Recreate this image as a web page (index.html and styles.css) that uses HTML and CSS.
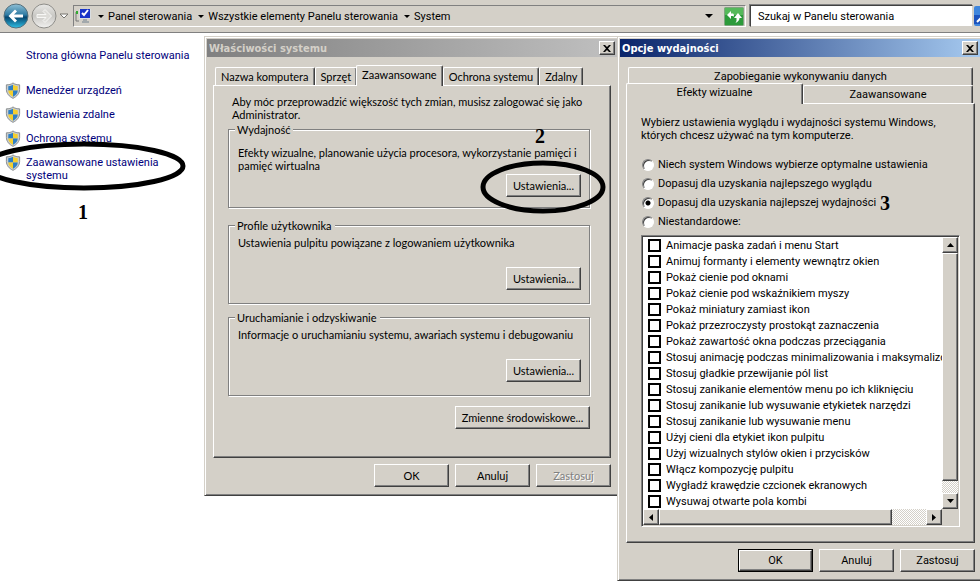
FILE: index.html
```html
<!DOCTYPE html>
<html lang="pl">
<head>
    <meta charset="UTF-8">
    <meta name="viewport" content="width=device-width, initial-scale=1.0">
    <title>System</title>
    <link rel="stylesheet" href="styles.css">
</head>
<body>
    <svg class="defs" aria-hidden="true">
        <linearGradient id="blueBall" x1="0" y1="0" x2="0" y2="1">
            <stop offset="0" stop-color="#8fc0d6"/>
            <stop offset="0.45" stop-color="#2f7ba3"/>
            <stop offset="0.55" stop-color="#06466f"/>
            <stop offset="1" stop-color="#2fc0e6"/>
        </linearGradient>
        <linearGradient id="grayBall" x1="0" y1="0" x2="0" y2="1">
            <stop offset="0" stop-color="#e8e8e6"/>
            <stop offset="0.5" stop-color="#c9c8c4"/>
            <stop offset="1" stop-color="#f2f2f0"/>
        </linearGradient>
        <symbol id="shield" viewBox="0 0 16 18">
            <path d="M8 1C6 2.600 3.500 3 1 3v5c0 4 3 7.500 7 9.300C12 15.500 15 12 15 8V3C12.500 3 10 2.600 8 1z" fill="#c9ced0" stroke="#85898b"/>
            <path d="M8 3C6.500 4 4.700 4.500 3 4.500V9h5z" fill="#2f7fc4"/>
            <path d="M8 3c1.500 1 3.300 1.500 5 1.500V9H8z" fill="#f5cf2e"/>
            <path d="M3 9h5v6.700C5 14 3 11.800 3 9z" fill="#f5cf2e"/>
            <path d="M13 9H8v6.700c3-1.700 5-3.900 5-6.700z" fill="#2f7fc4"/>
        </symbol>
        <symbol id="cross" viewBox="0 0 8 7">
            <path d="M0 0h2l2 2 2-2h2L5 3.500 8 7H6L4 5 2 7H0l3-3.500z" fill="#000"/>
        </symbol>
    </svg>

    <header class="toolbar">
        <div class="nav">
            <button class="nav-btn" aria-label="Wstecz">
                <svg width="26" height="26" viewBox="0 0 26 26"><circle cx="13" cy="13" r="12" fill="url(#blueBall)" stroke="#56707c"/><path d="M5.500 13l6.500-6.500 2 2-3 3H20v3h-9l3 3-2 2z" fill="#fff"/></svg>
            </button>
            <button class="nav-btn" aria-label="Dalej">
                <svg width="26" height="26" viewBox="0 0 26 26"><circle cx="13" cy="13" r="12" fill="url(#grayBall)" stroke="#8e8d89"/><path d="M20.500 13L14 6.500l-2 2 3 3H6v3h9l-3 3 2 2z" fill="#dddcd8" stroke="#f7f7f5"/></svg>
            </button>
            <svg class="nav-more" width="10" height="6" viewBox="0 0 10 6"><path d="M1 1h8L5 5z" fill="#fff" stroke="#77756f"/></svg>
        </div>
        <nav class="address">
            <svg width="17" height="16" viewBox="0 0 17 16"><path d="M1 4v9h3" fill="none" stroke="#777"/><path d="M1 3h2v3H1z" fill="#3a3"/><rect x="4" y="1" width="12" height="10" fill="#d9dde0"/><rect x="5" y="1" width="10" height="9" fill="#1733c8"/><path d="M7 5l2 2 4-5" fill="none" stroke="#fff" stroke-width="2"/><path d="M8 11h4v2h2v2H7v-2h1z" fill="#a3a9ac"/></svg>
            <i class="down"></i>
            <a href="#">Panel sterowania</a>
            <i class="down"></i>
            <a href="#">Wszystkie elementy Panelu sterowania</a>
            <i class="down"></i>
            <a href="#">System</a>
            <i class="down down-last"></i>
            <button class="refresh" aria-label="Odśwież">
                <svg width="20" height="19" viewBox="0 0 20 19"><rect x="0.500" y="0.500" width="19" height="18" rx="1" fill="#2c9a3a" stroke="#7fa47f"/><path d="M1 1h18v7H1z" fill="#55b95a"/><path d="M3 8l4-4v2.500h2q1 0 1 3L8.500 9H7v3z" fill="#fff"/><path d="M10 11l4-5 4 5h-2.500q0 3-4 5 1.500-2 1-5z" fill="#fff"/></svg>
            </button>
        </nav>
        <input class="search" type="text" value="Szukaj w Panelu sterowania" aria-label="Szukaj">
        <button class="search-btn" aria-label="Szukaj">
            <svg width="20" height="20" viewBox="0 0 20 20"><rect width="20" height="20" rx="2" fill="#3f86dd"/><path d="M0 9h20v9H0z" fill="#1c53bd"/><path d="M3 16l5-5" stroke="#fff" stroke-width="2"/><circle cx="11" cy="8" r="4" fill="none" stroke="#fff" stroke-width="2"/></svg>
        </button>
    </header>

    <main class="desktop">
        <aside class="sidebar">
            <a class="home" href="#">Strona główna Panelu sterowania</a>
            <ul class="tasks">
                <li><svg class="shield"><use href="#shield"/></svg><a href="#">Menedżer urządzeń</a></li>
                <li><svg class="shield"><use href="#shield"/></svg><a href="#">Ustawienia zdalne</a></li>
                <li><svg class="shield"><use href="#shield"/></svg><a href="#">Ochrona systemu</a></li>
                <li class="marked">
                    <svg class="shield"><use href="#shield"/></svg><a href="#">Zaawansowane ustawienia systemu</a>
                    <svg class="ring ring-task" viewBox="0 0 204 50"><ellipse cx="102" cy="25" rx="99" ry="22"/></svg>
                    <b class="step step-1">1</b>
                </li>
            </ul>
        </aside>

        <section class="window system">
            <div class="titlebar">
                <h2>Właściwości systemu</h2>
                <button class="close" aria-label="Zamknij"><svg width="8" height="7"><use href="#cross"/></svg></button>
            </div>
            <div class="tabs">
                <button class="tab">Nazwa komputera</button>
                <button class="tab">Sprzęt</button>
                <button class="tab active">Zaawansowane</button>
                <button class="tab">Ochrona systemu</button>
                <button class="tab">Zdalny</button>
            </div>
            <div class="panel">
                <p class="intro">Aby móc przeprowadzić większość tych zmian, musisz zalogować się jako Administrator.</p>
                <fieldset class="group marked">
                    <legend>Wydajność</legend>
                    <p>Efekty wizualne, planowanie użycia procesora, wykorzystanie pamięci i pamięć wirtualna</p>
                    <button class="btn">Ustawienia...</button>
                    <svg class="ring ring-settings" viewBox="0 0 126 54"><ellipse cx="63" cy="27" rx="60" ry="24"/></svg>
                    <b class="step step-2">2</b>
                </fieldset>
                <fieldset class="group">
                    <legend>Profile użytkownika</legend>
                    <p>Ustawienia pulpitu powiązane z logowaniem użytkownika</p>
                    <button class="btn">Ustawienia...</button>
                </fieldset>
                <fieldset class="group">
                    <legend>Uruchamianie i odzyskiwanie</legend>
                    <p>Informacje o uruchamianiu systemu, awariach systemu i debugowaniu</p>
                    <button class="btn">Ustawienia...</button>
                </fieldset>
                <button class="btn btn-wide">Zmienne środowiskowe...</button>
            </div>
            <div class="actions">
                <button class="btn">OK</button>
                <button class="btn">Anuluj</button>
                <button class="btn" disabled>Zastosuj</button>
            </div>
        </section>

        <section class="window performance">
            <div class="titlebar">
                <h2>Opcje wydajności</h2>
                <button class="close" aria-label="Zamknij"><svg width="8" height="7"><use href="#cross"/></svg></button>
            </div>
            <div class="tabs tabs-back">
                <button class="tab">Zapobieganie wykonywaniu danych</button>
            </div>
            <div class="tabs tabs-front">
                <button class="tab active">Efekty wizualne</button>
                <button class="tab">Zaawansowane</button>
            </div>
            <div class="panel">
                <p>Wybierz ustawienia wyglądu i wydajności systemu Windows, których chcesz używać na tym komputerze.</p>
                <div class="choices">
                    <label><input type="radio" name="effects"> Niech system Windows wybierze optymalne ustawienia</label>
                    <label><input type="radio" name="effects"> Dopasuj dla uzyskania najlepszego wyglądu</label>
                    <label><input type="radio" name="effects" checked> Dopasuj dla uzyskania najlepszej wydajności <b class="step">3</b></label>
                    <label><input type="radio" name="effects"> Niestandardowe:</label>
                </div>
                <div class="listbox">
                    <div class="options">
                        <label><input type="checkbox"> Animacje paska zadań i menu Start</label>
                        <label><input type="checkbox"> Animuj formanty i elementy wewnątrz okien</label>
                        <label><input type="checkbox"> Pokaż cienie pod oknami</label>
                        <label><input type="checkbox"> Pokaż cienie pod wskaźnikiem myszy</label>
                        <label><input type="checkbox"> Pokaż miniatury zamiast ikon</label>
                        <label><input type="checkbox"> Pokaż przezroczysty prostokąt zaznaczenia</label>
                        <label><input type="checkbox"> Pokaż zawartość okna podczas przeciągania</label>
                        <label><input type="checkbox"> Stosuj animację podczas minimalizowania i maksymalizowania</label>
                        <label><input type="checkbox"> Stosuj gładkie przewijanie pól list</label>
                        <label><input type="checkbox"> Stosuj zanikanie elementów menu po ich kliknięciu</label>
                        <label><input type="checkbox"> Stosuj zanikanie lub wysuwanie etykietek narzędzi</label>
                        <label><input type="checkbox"> Stosuj zanikanie lub wysuwanie menu</label>
                        <label><input type="checkbox"> Użyj cieni dla etykiet ikon pulpitu</label>
                        <label><input type="checkbox"> Użyj wizualnych stylów okien i przycisków</label>
                        <label><input type="checkbox"> Włącz kompozycję pulpitu</label>
                        <label><input type="checkbox"> Wygładź krawędzie czcionek ekranowych</label>
                        <label><input type="checkbox"> Wysuwaj otwarte pola kombi</label>
                    </div>
                    <div class="scroll scroll-y">
                        <button class="arrow" aria-label="W górę"><svg width="7" height="4"><path d="M0 4h7L3.500 0z"/></svg></button>
                        <div class="thumb"></div>
                        <button class="arrow" aria-label="W dół"><svg width="7" height="4"><path d="M0 0h7L3.500 4z"/></svg></button>
                    </div>
                    <div class="scroll scroll-x">
                        <button class="arrow" aria-label="W lewo"><svg width="4" height="7"><path d="M4 0v7L0 3.500z"/></svg></button>
                        <div class="thumb"></div>
                        <button class="arrow" aria-label="W prawo"><svg width="4" height="7"><path d="M0 0v7l4-3.500z"/></svg></button>
                    </div>
                </div>
            </div>
            <div class="actions">
                <button class="btn btn-default">OK</button>
                <button class="btn">Anuluj</button>
                <button class="btn">Zastosuj</button>
            </div>
        </section>
    </main>
</body>
</html>
```
FILE: styles.css
```css
* {
    box-sizing: border-box;
}
body {
    margin: 0;
    overflow: hidden;
    background-color: #fff;
    color: #000;
    font: 11px/13px Tahoma, Roboto, sans-serif;
}
button, input {
    margin: 0;
    padding: 0;
    border: 0;
    color: inherit;
    font: inherit;
}
p, h2, ul {
    margin: 0;
    padding: 0;
}
svg {
    display: block;
}
.defs {
    position: absolute;
    width: 0;
    height: 0;
}

/* top bar */
.toolbar {
    display: flex;
    align-items: center;
    height: 33px;
    margin-right: -14px;
    padding-left: 3px;
    background-color: #d4d0c8;
    border-bottom: 1px solid #808080;
}
.nav {
    display: flex;
    align-items: center;
    gap: 2px;
    width: 70px;
}
.nav-btn {
    background: none;
}
.address {
    display: flex;
    flex: 1;
    align-items: center;
    height: 22px;
    padding-left: 1px;
    border: 1px solid #808080;
    border-right-color: #fff;
    border-bottom-color: #fff;
}
.address a {
    color: #000;
    text-decoration: none;
}
.down {
    width: 6px;
    margin: 0 4px 0 6px;
    border: solid transparent;
    border-width: 3px 3px 0;
    border-top-color: #000;
}
.down-last {
    width: 8px;
    margin: 0 11px 0 auto;
    border-width: 4px 4px 0;
    border-top-color: #000;
}
.refresh {
    margin-right: 1px;
    background: none;
}
.search {
    width: 223px;
    height: 22px;
    margin: 0 1px 0 4px;
    padding: 0 7px;
    background-color: #fff;
    border: 1px solid #404040;
    border-right-color: #d4d0c8;
    border-bottom-color: #d4d0c8;
    box-shadow: -1px -1px #808080;
}
.search-btn {
    background: none;
}

/* left column */
.desktop {
    display: flex;
    align-items: flex-start;
    margin: 3px -3px 0 0;
}
.sidebar {
    width: 204px;
    padding: 13px 0 0 5px;
}
.sidebar a {
    color: #00007b;
    text-decoration: none;
}
.home {
    display: block;
    margin-left: 21px;
}
.tasks {
    margin-top: 19px;
    list-style: none;
}
.tasks li {
    display: flex;
    gap: 5px;
    min-height: 24px;
    padding-top: 3px;
}
.tasks a {
    max-width: 150px;
}
.shield {
    flex: none;
    width: 16px;
    height: 17px;
    margin-top: -2px;
}
.marked {
    position: relative;
}
.ring {
    position: absolute;
    z-index: 2;
    fill: none;
    stroke: #000;
    stroke-width: 5px;
    pointer-events: none;
}
.ring-task {
    top: -12px;
    left: -23px;
    width: 204px;
}
.ring-settings {
    top: 24px;
    right: -17px;
    width: 126px;
}
.step {
    font: bold 20px/20px "Liberation Serif", serif;
}
.step-1 {
    position: absolute;
    top: 49px;
    left: 73px;
}
.step-2 {
    position: absolute;
    top: -10px;
    right: 44px;
}

/* windows */
.window {
    background-color: #d4d0c8;
    border: 1px solid #d4d0c8;
    border-right-color: #404040;
    border-bottom-color: #404040;
    box-shadow: inset 1px 1px #fff, inset -1px -1px #808080;
    padding: 2px 2px 8px;
}
.system {
    width: 416px;
    margin-right: -3px;
    font-family: "MS Sans Serif", Lato, Arial, sans-serif;
}
.performance {
    position: relative;
    flex: 1;
    min-width: 0;
}
.titlebar {
    display: flex;
    align-items: center;
    justify-content: space-between;
    height: 18px;
    margin-bottom: 8px;
    padding: 0 2px;
    background: linear-gradient(to right, #0a246a, #a6caf0);
    color: #fff;
}
.system .titlebar {
    background: linear-gradient(to right, #808080, #c0c0c0);
    color: #d4d0c8;
}
.titlebar h2 {
    font: bold 11px/13px Tahoma, "DejaVu Sans Condensed", sans-serif;
}
.close {
    display: flex;
    align-items: center;
    justify-content: center;
    width: 16px;
    height: 14px;
}
.btn, .close, .arrow, .thumb {
    background-color: #d4d0c8;
    border: 1px solid #fff;
    border-right-color: #404040;
    border-bottom-color: #404040;
    box-shadow: inset -1px -1px #808080;
}
.btn {
    width: 75px;
    height: 23px;
}
.btn:disabled {
    color: #808080;
    text-shadow: 1px 1px #fff;
}
.btn-wide {
    width: 135px;
}
.btn-default {
    outline: 1px solid #000;
    outline-offset: -1px;
    border-width: 2px;
}
.tabs {
    display: flex;
    align-items: flex-end;
    height: 20px;
    padding: 0 8px;
}
.tab {
    height: 18px;
    padding: 0 5px;
    background-color: #d4d0c8;
    border: 1px solid #fff;
    border-right-color: #404040;
    border-bottom: 0;
    border-radius: 2px 2px 0 0;
    box-shadow: inset -1px 0 #808080;
}
.tab.active {
    position: relative;
    height: 21px;
    margin: 0 0 -1px -1px;
    padding-bottom: 3px;
}
.performance .tabs {
    padding: 0 7px 0 8px;
}
.performance .tab {
    flex: 1;
}
.performance .tabs-front {
    height: 18px;
    padding-left: 6px;
}
.performance .tabs-front .active {
    flex: none;
    width: 51%;
    margin-left: 0;
}
.panel {
    margin: 0 6px;
    border: 1px solid #fff;
    border-right-color: #404040;
    border-bottom-color: #404040;
    box-shadow: inset -1px -1px #808080;
}
.system .panel {
    display: flex;
    flex-direction: column;
    padding: 9px 20px 28px 14px;
}
.performance .panel {
    margin-right: 5px;
    padding: 12px 14px 15px;
}
.intro {
    margin: 0 0 2px 4px;
}
.group {
    height: 85px;
    min-width: 0;
    margin: 0 0 7px;
    padding: 4px 8px 0 9px;
    border: 1px solid #808080;
    box-shadow: inset 1px 1px #fff, 1px 1px #fff;
}
.group.marked {
    margin-bottom: 11px;
    padding-top: 10px;
}
.group legend {
    margin-left: -3px;
    padding: 0 3px 0 2px;
    background-color: #d4d0c8;
}
.group p {
    height: 31px;
}
.group.marked p {
    height: 28px;
}
.group .btn {
    display: block;
    margin-left: auto;
}
.panel > .btn {
    align-self: flex-end;
    margin-top: 3px;
}
.actions {
    display: flex;
    justify-content: flex-end;
    gap: 6px;
    margin: 6px 6px 0;
}
.performance .actions {
    margin-right: 5px;
}

/* visual effects page */
.choices {
    display: grid;
    margin-top: 13px;
}
.choices label {
    display: flex;
    align-items: center;
    height: 19px;
    gap: 4px;
}
.choices input {
    appearance: none;
    width: 12px;
    height: 12px;
    margin-left: 1px;
    background-color: #fff;
    border: 1px solid #808080;
    border-right-color: #fff;
    border-bottom-color: #fff;
    border-radius: 50%;
    box-shadow: inset 1px 1px #404040;
}
.choices input:checked {
    background-image: radial-gradient(circle, #000 2px, #fff 3px);
}
.listbox {
    display: grid;
    grid-template-columns: minmax(0, 1fr) 16px;
    margin-top: 4px;
    background-color: #d4d0c8;
    border: 1px solid #808080;
    border-right-color: #fff;
    border-bottom-color: #fff;
    box-shadow: inset 1px 1px #404040;
    padding: 1px;
}
.options {
    overflow: hidden;
    background-color: #fff;
}
.options label {
    display: flex;
    align-items: center;
    gap: 5px;
    height: 16px;
    padding-left: 5px;
    white-space: nowrap;
}
.options input {
    appearance: none;
    flex: none;
    width: 13px;
    height: 13px;
    background-color: #fff;
    border: 2px solid #000;
}
.scroll {
    display: flex;
    background: repeating-conic-gradient(#fff 0 25%, #d4d0c8 0 50%) 0 0 / 2px 2px;
}
.scroll-y {
    flex-direction: column;
}
.scroll-y .thumb {
    height: 228px;
    margin-bottom: auto;
}
.scroll-x .thumb {
    flex: 0 0 78%;
    margin-right: auto;
}
.arrow {
    display: flex;
    flex: none;
    align-items: center;
    justify-content: center;
    width: 16px;
    height: 16px;
}
```
